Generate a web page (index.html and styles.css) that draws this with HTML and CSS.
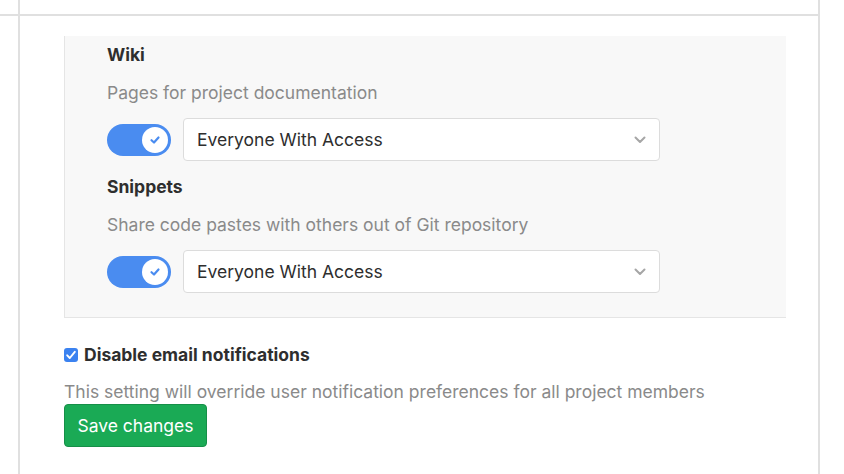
FILE: index.html
```html
<!DOCTYPE html>
<html>
<head>
<meta charset="utf-8">
<link rel="stylesheet" href="styles.css">
</head>
<body>
<div class="frame">
  <div class="top-row"><div class="rail"></div></div>
  <div class="main-row">
    <div class="rail"></div>
    <div class="content">
      <div class="panel">
        <div class="feature">
          <div class="feature-title">Wiki</div>
          <div class="feature-desc">Pages for project documentation</div>
          <div class="control-row">
            <span class="toggle"><span class="knob"><svg width="14" height="14" viewBox="0 0 14 14"><path d="M3.5 7.2 L6 9.5 L10.5 4.5" fill="none" stroke="#4a8cf0" stroke-width="2.2" stroke-linecap="round" stroke-linejoin="round"/></svg></span></span>
            <div class="select"><span>Everyone With Access</span><svg class="chev" width="12" height="8" viewBox="0 0 12 8"><path d="M1.5 1.5 L6 6 L10.5 1.5" fill="none" stroke="#a6a6a6" stroke-width="2" stroke-linecap="round" stroke-linejoin="round"/></svg></div>
          </div>
        </div>
        <div class="feature">
          <div class="feature-title">Snippets</div>
          <div class="feature-desc">Share code pastes with others out of Git repository</div>
          <div class="control-row">
            <span class="toggle"><span class="knob"><svg width="14" height="14" viewBox="0 0 14 14"><path d="M3.5 7.2 L6 9.5 L10.5 4.5" fill="none" stroke="#4a8cf0" stroke-width="2.2" stroke-linecap="round" stroke-linejoin="round"/></svg></span></span>
            <div class="select"><span>Everyone With Access</span><svg class="chev" width="12" height="8" viewBox="0 0 12 8"><path d="M1.5 1.5 L6 6 L10.5 1.5" fill="none" stroke="#a6a6a6" stroke-width="2" stroke-linecap="round" stroke-linejoin="round"/></svg></div>
          </div>
        </div>
      </div>
      <label class="check-row">
        <span class="checkbox"><svg width="14" height="14" viewBox="0 0 14 14"><path d="M3.2 7.3 L5.8 10 L10.8 3.8" fill="none" stroke="#fff" stroke-width="1.9" stroke-linecap="round" stroke-linejoin="round"/></svg></span>
        <span class="check-label">Disable email notifications</span>
      </label>
      <div class="help">This setting will override user notification preferences for all project members</div>
      <button class="btn-save">Save changes</button>
    </div>
  </div>
</div>
</body>
</html>
```

FILE: styles.css
```css
html, body {
  margin: 0;
  padding: 0;
  background: #fff;
}
body {
  font-family: Inter, "Liberation Sans", Arial, sans-serif;
  color: #2e2e2e;
  height: 474px;
  overflow: hidden;
}
.frame {
  width: 818px;
  border-right: 2px solid #e0e0e0;
  height: 474px;
  display: flex;
  flex-direction: column;
}
.top-row {
  height: 14px;
  border-bottom: 2px solid #e0e0e0;
  display: flex;
}
.rail {
  width: 18px;
  border-right: 2px solid #e0e0e0;
  flex: none;
}
.main-row {
  flex: 1;
  display: flex;
}
.content {
  flex: 1;
  padding: 20px 32px 0 44px;
}
.panel {
  background: #f8f8f8;
  border-left: 1px solid #e5e5e5;
  border-bottom: 1px solid #e5e5e5;
  padding: 7px 0 24px 42px;
}
.feature-title {
  font-weight: 700;
  font-size: 17.5px;
  line-height: 24px;
}
.feature-desc {
  font-size: 17.5px;
  color: #8a8a8a;
  line-height: 24px;
  margin-top: 14px;
}
.control-row {
  display: flex;
  align-items: center;
  margin-top: 13px;
  margin-bottom: 14px;
}
.feature:last-child .control-row {
  margin-bottom: 0;
}
.toggle {
  width: 64px;
  height: 32px;
  border-radius: 16px;
  background: #4a8cf0;
  position: relative;
  flex: none;
  margin-right: 12px;
}
.knob {
  position: absolute;
  right: 3px;
  top: 3px;
  width: 26px;
  height: 26px;
  border-radius: 50%;
  background: #fff;
  display: flex;
  align-items: center;
  justify-content: center;
}
.select {
  height: 41px;
  background: #fff;
  border: 1px solid #dcdcdc;
  border-radius: 4px;
  display: flex;
  align-items: center;
  justify-content: space-between;
  padding: 0 13px 0 13px;
  box-sizing: content-box;
  width: 449px;
  font-size: 17.5px;
  color: #2e2e2e;
}
.check-row {
  display: flex;
  align-items: center;
  margin-top: 26px;
}
.checkbox {
  width: 14px;
  height: 14px;
  border-radius: 3px;
  background: #3b82f0;
  display: flex;
  margin-right: 6px;
}
.check-label {
  font-weight: 700;
  font-size: 17.5px;
  line-height: 22px;
}
.help {
  font-size: 17.5px;
  color: #8a8a8a;
  line-height: 24px;
  margin-top: 14px;
}
.btn-save {
  margin-top: 0;
  font-family: inherit;
  font-size: 17.5px;
  color: #fff;
  background: #1aaa55;
  border: 1px solid #168f48;
  border-radius: 4px;
  height: 43px;
  padding: 0;
  width: 143px;
  white-space: nowrap;
}
```
